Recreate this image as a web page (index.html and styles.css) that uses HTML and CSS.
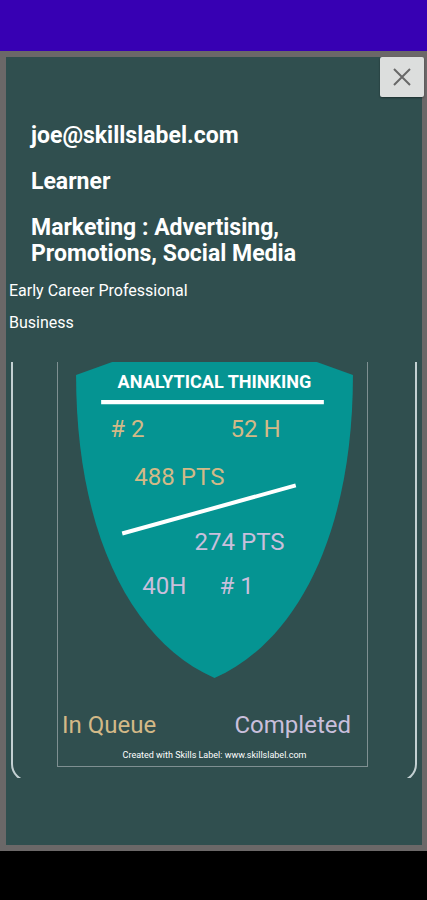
FILE: index.html
```html
<!DOCTYPE html>
<html lang="en">
<head>
    <meta charset="UTF-8">
    <meta name="viewport" content="width=device-width, initial-scale=1.0">
    <title>Skills Label</title>
    <link rel="stylesheet" href="styles.css">
</head>
<body>
    <div class="status-bar"></div>
    <main class="dialog">
        <button type="button" class="close-btn" aria-label="Close">
            <svg width="20" height="20" viewBox="0 0 20 20">
                <path d="M2 2 L18 18 M18 2 L2 18" fill="none" stroke="#686868" stroke-width="2"/>
            </svg>
        </button>

        <div class="profile">
            <h2>joe@skillslabel.com</h2>
            <h2>Learner</h2>
            <h2>Marketing : Advertising, Promotions, Social Media</h2>
        </div>
        <div class="details">
            <p>Early Career Professional</p>
            <p>Business</p>
        </div>

        <div class="card">
            <div class="label">
                <svg class="shield" viewBox="0 0 308 316">
                    <path d="M18 13 L54 0 H258 L294 13 C294 168 240 278 156 315 C72 278 18 168 18 13 Z" fill="#059492"/>
                    <text class="skill" x="156" y="26" text-anchor="middle">ANALYTICAL THINKING</text>
                    <path d="M43 40 H265 M64 171 L237 123" stroke="#fff" stroke-width="4"/>
                    <g class="queue">
                        <text x="52" y="75"># 2</text>
                        <text x="172" y="75">52 H</text>
                        <text x="76" y="123">488 PTS</text>
                    </g>
                    <g class="completed">
                        <text x="136" y="187">274 PTS</text>
                        <text x="84" y="231">40H</text>
                        <text x="161" y="231"># 1</text>
                    </g>
                </svg>
                <div class="legend">
                    <span class="queue">In Queue</span>
                    <span class="completed">Completed</span>
                </div>
                <p class="credit">Created with Skills Label: www.skillslabel.com</p>
            </div>
        </div>
    </main>
    <div class="nav-bar"></div>
</body>
</html>
```

FILE: styles.css
```css
* {
    box-sizing: border-box;
}

body {
    font-family: Roboto, sans-serif;
    margin: 0;
    min-height: 100vh;
    display: flex;
    flex-direction: column;
    background-color: #000;
    color: #fff;
}

.status-bar {
    height: 51px;
    background-color: #3700b3;
}

.nav-bar {
    height: 49px;
    background-color: #000;
}

.dialog {
    position: relative;
    flex: 1;
    border: 6px solid #6b6868;
    border-right-width: 5px;
    background-color: #304f4f;
}

.close-btn {
    position: absolute;
    top: 0;
    right: -2px;
    width: 44px;
    height: 40px;
    padding: 0;
    display: flex;
    align-items: center;
    justify-content: center;
    background-color: #dcdedd;
    border: none;
    border-radius: 2px;
    box-shadow: 0 1px 2px rgba(0, 0, 0, 0.4);
    cursor: pointer;
}

.profile {
    padding: 66px 80px 0 25px;
}

.profile h2 {
    margin: 0 0 20px;
    font-size: 23px;
    line-height: 26px;
    font-weight: bold;
}

.profile h2:last-child {
    margin-bottom: 14px;
}

.details {
    padding-left: 3px;
}

.details p {
    margin: 0 0 12px;
    font-size: 16px;
    line-height: 20px;
}

/* the round outline runs past the card and is cut off */
.card {
    position: relative;
    overflow: hidden;
    margin: 29px 5px 0;
    padding: 0 49px 11px 46px;
}

.card::before {
    content: "";
    position: absolute;
    top: -20px;
    right: 0;
    bottom: -4px;
    left: 0;
    border: 2px solid #c3d0d2;
    border-radius: 18px;
}

.label {
    border: 1px solid #7f9092;
    border-top: none;
}

.shield {
    display: block;
    width: 100%;
    font-size: 24px;
}

.skill {
    font-size: 18px;
    font-weight: bold;
    fill: #fff;
}

.queue {
    color: #d3b987;
    fill: #d3b987;
}

.completed {
    color: #c9bfdc;
    fill: #c9bfdc;
}

.legend {
    display: flex;
    justify-content: space-between;
    margin-top: 32px;
    padding: 0 16px 0 4px;
    font-size: 24px;
    line-height: 28px;
}

.credit {
    margin: 10px 0 5px;
    padding-left: 4px;
    text-align: center;
    font-size: 9px;
    line-height: 12px;
}
```
